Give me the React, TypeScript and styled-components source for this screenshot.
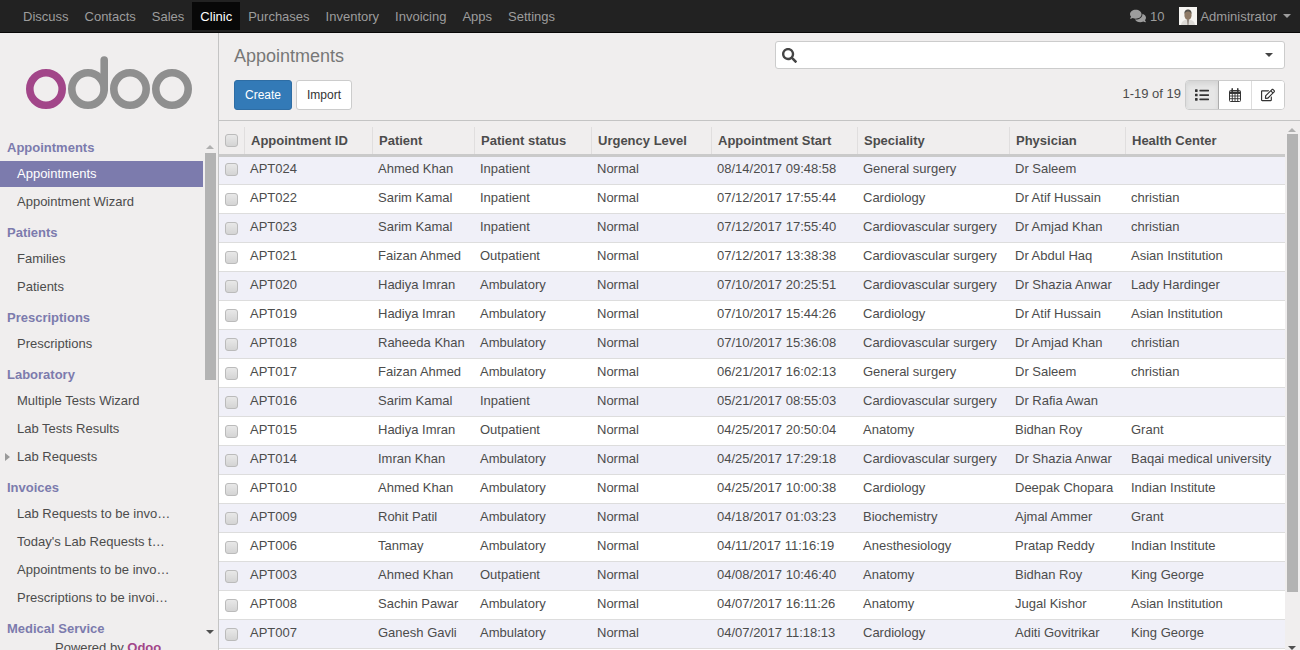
import React from "react";
import styled, { createGlobalStyle } from "styled-components";
import { FaComments, FaSearch, FaList, FaRegEdit } from "react-icons/fa";

const GlobalStyle = createGlobalStyle`
  html, body { margin: 0; padding: 0; height: 650px; overflow: hidden; }
  body { font-family: "Liberation Sans", Arial, sans-serif; font-size: 13px; color: #4c4c4c; background: #f0eeee; }
`;

const Shell = styled.div`
  display: flex;
  flex-direction: column;
  width: 1300px;
  height: 650px;
  overflow: hidden;
`;

const TopBar = styled.nav`
  display: flex;
  justify-content: space-between;
  align-items: stretch;
  height: 32px;
  padding: 0 9px 0 15px;
  background: #222;
  border-bottom: 1px solid #080808;
  flex: none;
`;

const NavGroup = styled.div`
  display: flex;
  align-items: stretch;
  padding-top: 2px;
  padding-bottom: 2px;
`;

const NavItem = styled.a<{ $active?: boolean }>`
  display: flex;
  align-items: center;
  padding: 0 8px;
  color: ${(p) => (p.$active ? "#fff" : "#9d9d9d")};
  background: ${(p) => (p.$active ? "#080808" : "transparent")};
`;

const Messages = styled.a`
  display: flex;
  align-items: center;
  gap: 4px;
  margin-right: 15px;
  color: #9d9d9d;
  svg { width: 16px; height: 16px; }
`;

const UserMenu = styled.a`
  display: flex;
  align-items: center;
  gap: 4px;
  color: #9d9d9d;
  svg { margin-right: -1px; }
`;

const Caret = styled.span<{ $color?: string }>`
  display: inline-block;
  width: 0;
  height: 0;
  margin-left: 2px;
  border-top: 4px solid ${(p) => p.$color ?? "#9d9d9d"};
  border-left: 4px solid transparent;
  border-right: 4px solid transparent;
`;

const Body = styled.div`
  display: flex;
  flex: 1;
  min-height: 0;
`;

const Sidebar = styled.aside`
  position: relative;
  width: 218px;
  flex: none;
  border-right: 1px solid #c4c4c4;
  display: flex;
  flex-direction: column;
  overflow: hidden;
`;

const LogoBox = styled.div`
  height: 103px;
  flex: none;
  padding: 23px 0 0 26px;
  box-sizing: border-box;
  svg { display: block; }
`;

const SideScroll = styled.div`
  display: flex;
  flex: 1;
  min-height: 0;
`;

const SideMenu = styled.div`
  width: 203px;
  flex: none;
`;

const GroupTitle = styled.div`
  height: 24px;
  line-height: 24px;
  margin-top: 5px;
  padding-left: 7px;
  font-weight: bold;
  color: #7c7bad;
  &:first-child { margin-top: 0; }
`;

const MenuItem = styled.div<{ $active?: boolean }>`
  position: relative;
  height: 28px;
  line-height: 28px;
  padding: 0 32px 0 17px;
  color: ${(p) => (p.$active ? "#fff" : "#4c4c4c")};
  white-space: nowrap;
  overflow: hidden;
  text-overflow: ellipsis;
  ${(p) =>
    p.$active &&
    `background: #7c7bad;
     height: 26px;
     line-height: 26px;
     margin: 1px 0;`}
`;

const Arrow = styled.span`
  position: absolute;
  left: 5px;
  top: 10px;
  width: 0;
  height: 0;
  border-left: 5px solid #9a9a9a;
  border-top: 4px solid transparent;
  border-bottom: 4px solid transparent;
`;

const ScrollBar = styled.div<{ $thumbTop: number; $thumbHeight: number }>`
  position: relative;
  width: 12px;
  flex: none;
  &::before {
    content: "";
    position: absolute;
    left: 2px;
    top: ${(p) => p.$thumbTop}px;
    width: 11px;
    height: ${(p) => p.$thumbHeight}px;
    background: #b3b3b3;
  }
`;

const ScrollArrow = styled.span<{ $top: number; $down?: boolean }>`
  position: absolute;
  left: 3px;
  top: ${(p) => p.$top}px;
  width: 0;
  height: 0;
  border-left: 4px solid transparent;
  border-right: 4px solid transparent;
  ${(p) => (p.$down ? "border-top: 4px solid #505050;" : "border-bottom: 4px solid #b0b0b0;")}
`;

const Powered = styled.div`
  position: absolute;
  left: 55px;
  top: 607px;
  color: #4c4c4c;
  white-space: nowrap;
  b { color: #a24689; }
`;

const Main = styled.main`
  flex: 1;
  min-width: 0;
  display: flex;
  flex-direction: column;
`;

const ControlPanel = styled.div`
  display: grid;
  grid-template-columns: 1fr 510px;
  grid-template-rows: 47px 41px;
  flex: none;
  height: 88px;
  padding: 0 15px;
  box-sizing: border-box;
  border-bottom: 1px solid #c4c4c4;
`;

const Title = styled.h1`
  margin: 0;
  padding-top: 12px;
  font-size: 18px;
  line-height: 22px;
  font-weight: normal;
  color: #777;
`;

const SearchBox = styled.div`
  display: flex;
  align-items: center;
  justify-content: space-between;
  height: 28px;
  margin-top: 8px;
  padding: 0 11px 0 6px;
  box-sizing: border-box;
  background: #fff;
  border: 1px solid #ccc;
  border-radius: 3px;
  color: #444;
  svg { width: 15px; height: 15px; }
`;

const Buttons = styled.div`
  display: flex;
  gap: 4px;
  align-items: flex-start;
`;

const Button = styled.button<{ $primary?: boolean }>`
  height: 30px;
  padding: 0 10px;
  font: 12px "Liberation Sans", Arial, sans-serif;
  border-radius: 3px;
  border: 1px solid ${(p) => (p.$primary ? "#2e6da4" : "#ccc")};
  background: ${(p) => (p.$primary ? "#337ab7" : "#fff")};
  color: ${(p) => (p.$primary ? "#fff" : "#333")};
`;

const Pager = styled.div`
  display: flex;
  justify-content: flex-end;
  align-items: flex-start;
  gap: 4px;
`;

const PagerText = styled.span`
  line-height: 28px;
  color: #4c4c4c;
`;

const ViewSwitch = styled.div`
  display: flex;
  width: 100px;
  height: 30px;
  box-sizing: border-box;
  border: 1px solid #ccc;
  border-radius: 4px;
  overflow: hidden;
  background: #fff;
`;

const ViewButton = styled.span<{ $active?: boolean }>`
  display: flex;
  flex: 1;
  align-items: center;
  justify-content: center;
  color: #333;
  background: ${(p) => (p.$active ? "#e6e6e6" : "#fff")};
  box-shadow: ${(p) => (p.$active ? "inset 0 3px 5px rgba(0, 0, 0, 0.08)" : "none")};
  border-right: 1px solid ${(p) => (p.$active ? "#adadad" : "#ddd")};
  &:last-child { border-right: 0; }
  svg { width: 14px; height: 14px; }
`;

const TableArea = styled.div`
  flex: 1;
  min-height: 0;
  display: flex;
  padding-top: 6px;
  overflow: hidden;
`;

const Grid = styled.table`
  width: 1066px;
  flex: none;
  table-layout: fixed;
  border-collapse: collapse;
  align-self: flex-start;
`;

const HeadCell = styled.th`
  height: 28px;
  padding: 0 6px 0 6.5px;
  box-sizing: border-box;
  text-align: left;
  font-size: 13px;
  font-weight: bold;
  color: #4c4c4c;
  border-left: 1px solid #e0dede;
  border-bottom: 3px solid #cacaca;
  white-space: nowrap;
  &:first-child { border-left: 0; padding-left: 6px; }
`;

const Row = styled.tr<{ $odd: boolean }>`
  height: 29px;
  background: ${(p) => (p.$odd ? "#f0f0f8" : "#fff")};
  &:first-child td { padding-bottom: 4px; }
`;

const Cell = styled.td`
  padding: 0 6px 2px;
  box-sizing: border-box;
  color: #4c4c4c;
  white-space: nowrap;
  overflow: hidden;
  border-bottom: 1px solid #ddd;
`;

const Check = styled.span<{ $head?: boolean }>`
  display: block;
  box-sizing: border-box;
  width: 13px;
  height: 13px;
  margin-top: ${(p) => (p.$head ? 0 : 3)}px;
  background: linear-gradient(#e8e8e8, #d4d4d4);
  border: 1px solid #bbb;
  border-radius: 3px;
`;

const columns = [25, 128, 102, 117, 120, 146, 152, 116, 160];
const heads = ["Appointment ID", "Patient", "Patient status", "Urgency Level", "Appointment Start", "Speciality", "Physician", "Health Center"];

const rows = [
  ["APT024", "Ahmed Khan", "Inpatient", "Normal", "08/14/2017 09:48:58", "General surgery", "Dr Saleem", ""],
  ["APT022", "Sarim Kamal", "Inpatient", "Normal", "07/12/2017 17:55:44", "Cardiology", "Dr Atif Hussain", "christian"],
  ["APT023", "Sarim Kamal", "Inpatient", "Normal", "07/12/2017 17:55:40", "Cardiovascular surgery", "Dr Amjad Khan", "christian"],
  ["APT021", "Faizan Ahmed", "Outpatient", "Normal", "07/12/2017 13:38:38", "Cardiovascular surgery", "Dr Abdul Haq", "Asian Institution"],
  ["APT020", "Hadiya Imran", "Ambulatory", "Normal", "07/10/2017 20:25:51", "Cardiovascular surgery", "Dr Shazia Anwar", "Lady Hardinger"],
  ["APT019", "Hadiya Imran", "Ambulatory", "Normal", "07/10/2017 15:44:26", "Cardiology", "Dr Atif Hussain", "Asian Institution"],
  ["APT018", "Raheeda Khan", "Ambulatory", "Normal", "07/10/2017 15:36:08", "Cardiovascular surgery", "Dr Amjad Khan", "christian"],
  ["APT017", "Faizan Ahmed", "Ambulatory", "Normal", "06/21/2017 16:02:13", "General surgery", "Dr Saleem", "christian"],
  ["APT016", "Sarim Kamal", "Inpatient", "Normal", "05/21/2017 08:55:03", "Cardiovascular surgery", "Dr Rafia Awan", ""],
  ["APT015", "Hadiya Imran", "Outpatient", "Normal", "04/25/2017 20:50:04", "Anatomy", "Bidhan Roy", "Grant"],
  ["APT014", "Imran Khan", "Ambulatory", "Normal", "04/25/2017 17:29:18", "Cardiovascular surgery", "Dr Shazia Anwar", "Baqai medical university"],
  ["APT010", "Ahmed Khan", "Ambulatory", "Normal", "04/25/2017 10:00:38", "Cardiology", "Deepak Chopara", "Indian Institute"],
  ["APT009", "Rohit Patil", "Ambulatory", "Normal", "04/18/2017 01:03:23", "Biochemistry", "Ajmal Ammer", "Grant"],
  ["APT006", "Tanmay", "Ambulatory", "Normal", "04/11/2017 11:16:19", "Anesthesiology", "Pratap Reddy", "Indian Institute"],
  ["APT003", "Ahmed Khan", "Outpatient", "Normal", "04/08/2017 10:46:40", "Anatomy", "Bidhan Roy", "King George"],
  ["APT008", "Sachin Pawar", "Ambulatory", "Normal", "04/07/2017 16:11:26", "Anatomy", "Jugal Kishor", "Asian Institution"],
  ["APT007", "Ganesh Gavli", "Ambulatory", "Normal", "04/07/2017 11:18:13", "Cardiology", "Aditi Govitrikar", "King George"],
];

const navItems = ["Discuss", "Contacts", "Sales", "Clinic", "Purchases", "Inventory", "Invoicing", "Apps", "Settings"];

const menu = [
  { title: "Appointments", items: ["Appointments", "Appointment Wizard"] },
  { title: "Patients", items: ["Families", "Patients"] },
  { title: "Prescriptions", items: ["Prescriptions"] },
  { title: "Laboratory", items: ["Multiple Tests Wizard", "Lab Tests Results", "Lab Requests"] },
  { title: "Invoices", items: ["Lab Requests to be invoiced", "Today's Lab Requests to be invoiced", "Appointments to be invoiced", "Prescriptions to be invoiced"] },
  { title: "Medical Service", items: [] as string[] },
];

function OdooLogo() {
  return (
    <svg width="168" height="56" viewBox="0 0 168 56">
      <circle cx="20" cy="33" r="16.2" fill="none" stroke="#a24689" strokeWidth="7.6" />
      <g fill="none" stroke="#8f8f8f" strokeWidth="7.6">
        <circle cx="62" cy="33" r="16.2" />
        <path d="M78.2 33V4" strokeLinecap="round" />
        <circle cx="104" cy="33" r="16.2" />
        <circle cx="146" cy="33" r="16.2" />
      </g>
    </svg>
  );
}

function Avatar() {
  return (
    <svg width="18" height="18" viewBox="0 0 18 18">
      <rect width="18" height="18" fill="#f6f5f2" />
      <path d="M2 18c.5-4 3.500-5.500 7-5.500s6.500 1.500 7 5.500z" fill="#dcdad6" />
      <path d="M8 12.500h2l-.5 5.500h-1z" fill="#8a8078" />
      <ellipse cx="9" cy="8" rx="3.600" ry="5" fill="#8e7a66" />
      <path d="M5.400 7C5.400 3.500 7 2.500 9 2.500s3.600 1 3.600 4.500C11.800 5 10 4.600 9 4.600S6.200 5 5.400 7z" fill="#55524c" />
    </svg>
  );
}

function CalendarIcon() {
  return (
    <svg viewBox="0 0 14 14" fill="none" stroke="currentColor" strokeWidth="1">
      <rect x="1.500" y="2.500" width="11" height="11" rx="1" />
      <path d="M1.500 5.500h11M1.500 8h11M1.500 10.700h11M4.300 5.500v8M7 5.500v8M9.700 5.500v8" strokeWidth="0.9" />
      <path d="M1.500 3.500h11v2h-11z" fill="currentColor" stroke="none" />
      <path d="M4.200.8v3M9.800.8v3" strokeWidth="1.500" strokeLinecap="round" />
    </svg>
  );
}

export default function App() {
  return (
    <Shell>
      <GlobalStyle />
      <TopBar>
        <NavGroup>
          {navItems.map((n) => (
            <NavItem key={n} $active={n === "Clinic"}>{n}</NavItem>
          ))}
        </NavGroup>
        <NavGroup>
          <Messages><FaComments /> 10</Messages>
          <UserMenu><Avatar /> Administrator <Caret /></UserMenu>
        </NavGroup>
      </TopBar>
      <Body>
        <Sidebar>
          <LogoBox><OdooLogo /></LogoBox>
          <SideScroll>
            <SideMenu>
              {menu.map((g) => (
                <React.Fragment key={g.title}>
                  <GroupTitle>{g.title}</GroupTitle>
                  {g.items.map((it, i) => (
                    <MenuItem key={it} $active={g.title === "Appointments" && i === 0}>
                      {it === "Lab Requests" && <Arrow />}
                      {it}
                    </MenuItem>
                  ))}
                </React.Fragment>
              ))}
            </SideMenu>
            <ScrollBar $thumbTop={17} $thumbHeight={227}>
              <ScrollArrow $top={9} />
              <ScrollArrow $top={494} $down />
            </ScrollBar>
          </SideScroll>
          <Powered>Powered by <b>Odoo</b></Powered>
        </Sidebar>
        <Main>
          <ControlPanel>
            <Title>Appointments</Title>
            <SearchBox><FaSearch /><Caret $color="#444" /></SearchBox>
            <Buttons>
              <Button $primary>Create</Button>
              <Button>Import</Button>
            </Buttons>
            <Pager>
              <PagerText>1-19 of 19</PagerText>
              <ViewSwitch>
                <ViewButton $active><FaList /></ViewButton>
                <ViewButton><CalendarIcon /></ViewButton>
                <ViewButton><FaRegEdit /></ViewButton>
              </ViewSwitch>
            </Pager>
          </ControlPanel>
          <TableArea>
            <Grid>
              <colgroup>
                {columns.map((w, i) => <col key={i} width={w} />)}
              </colgroup>
              <thead>
                <tr>
                  <HeadCell><Check $head /></HeadCell>
                  {heads.map((h) => <HeadCell key={h}>{h}</HeadCell>)}
                </tr>
              </thead>
              <tbody>
                {rows.map((r, i) => (
                  <Row key={r[0]} $odd={i % 2 === 0}>
                    <Cell><Check /></Cell>
                    {r.map((c, j) => <Cell key={j}>{c}</Cell>)}
                  </Row>
                ))}
                <Row $odd={false}><Cell colSpan={9} /></Row>
              </tbody>
            </Grid>
            <ScrollBar $thumbTop={7} $thumbHeight={458}>
              <ScrollArrow $top={1} />
              <ScrollArrow $top={519} $down />
            </ScrollBar>
          </TableArea>
        </Main>
      </Body>
    </Shell>
  );
}
